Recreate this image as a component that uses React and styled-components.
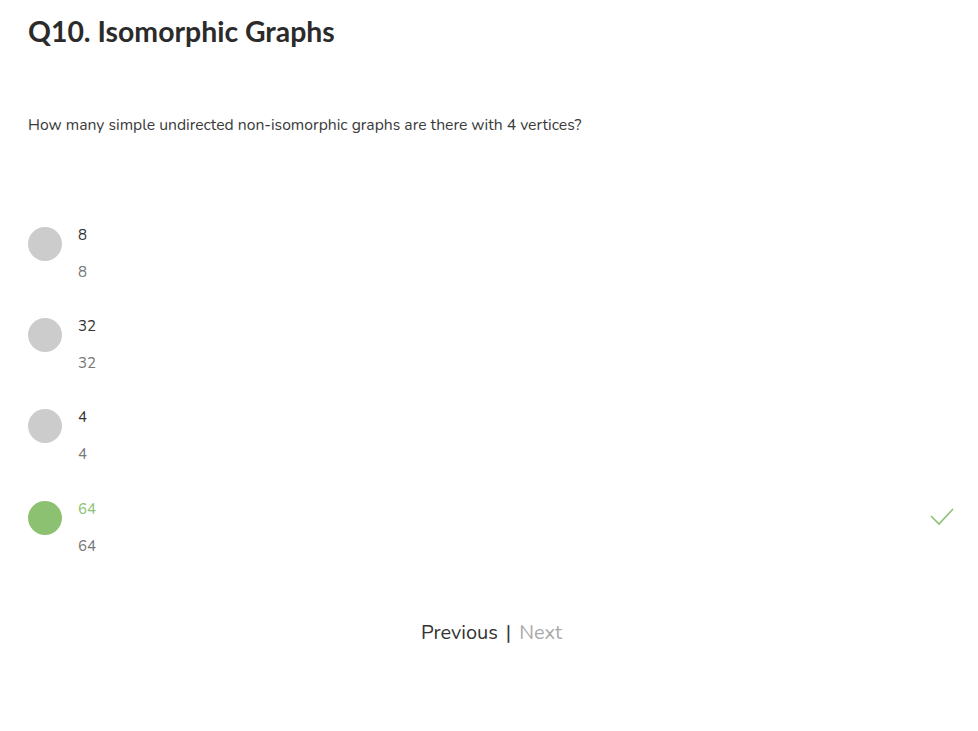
import React from 'react';
import styled, { createGlobalStyle } from 'styled-components';

const GlobalStyle = createGlobalStyle`
  body {
    margin: 0;
    background: #fff;
    font-family: Nunito, Lato, 'Open Sans', sans-serif;
    color: #333;
  }
`;

const Page = styled.div`
  padding: 0 23px 0 28px;
`;

const Title = styled.h1`
  font-family: Lato, sans-serif;
  font-size: 28.4px;
  font-weight: 700;
  color: #2b2b2b;
  margin: 0;
  padding-top: 15px;
  line-height: 32px;
`;

const Question = styled.p`
  font-size: 15.7px;
  color: #3a3a3a;
  margin: 68px 0 0;
  line-height: 20px;
`;

const Options = styled.ul`
  list-style: none;
  margin: 84px 0 0;
  padding: 0;
  display: flex;
  flex-direction: column;
  gap: 19.2px;
`;

const Option = styled.li`
  display: flex;
  align-items: flex-start;
  gap: 16px;
  height: 72px;
`;

const Dot = styled.span`
  width: 34px;
  height: 34px;
  margin-top: 8px;
  border-radius: 50%;
  flex: 0 0 auto;
  background: ${props => (props.$correct ? '#8dc172' : '#cccccc')};
`;

const Labels = styled.div`
  flex: 1;
  display: flex;
  flex-direction: column;
  gap: 18px;
  padding-top: 7px;
  font-size: 15px;
  line-height: 19px;
`;

const Answer = styled.span`
  color: ${props => (props.$correct ? '#8dc172' : '#333')};
`;

const Value = styled.span`
  color: #777;
`;

const Check = styled.svg`
  width: 26px;
  height: 20px;
  margin-top: 14px;
  flex: 0 0 auto;
`;

const Nav = styled.nav`
  display: flex;
  justify-content: center;
  align-items: center;
  gap: 8px;
  margin-top: 54px;
  font-size: 20px;
`;

const NavLink = styled.span`
  color: ${props => (props.$disabled ? '#aaa' : '#333')};
`;

const Divider = styled.span`
  color: #333;
`;

const options = [
  { answer: '8', value: '8' },
  { answer: '32', value: '32' },
  { answer: '4', value: '4' },
  { answer: '64', value: '64', correct: true },
];

const App = () => (
  <Page>
    <GlobalStyle />
    <Title>Q10. Isomorphic Graphs</Title>
    <Question>How many simple undirected non-isomorphic graphs are there with 4 vertices?</Question>
    <Options>
      {options.map(opt => (
        <Option key={opt.answer}>
          <Dot $correct={opt.correct} />
          <Labels>
            <Answer $correct={opt.correct}>{opt.answer}</Answer>
            <Value>{opt.value}</Value>
          </Labels>
          {opt.correct && (
            <Check viewBox="0 0 26 20">
              <polyline points="2,9 10,17 24,2" fill="none" stroke="#8dc172" strokeWidth="1.6" />
            </Check>
          )}
        </Option>
      ))}
    </Options>
    <Nav>
      <NavLink>Previous</NavLink>
      <Divider>|</Divider>
      <NavLink $disabled>Next</NavLink>
    </Nav>
  </Page>
);

export default App;
